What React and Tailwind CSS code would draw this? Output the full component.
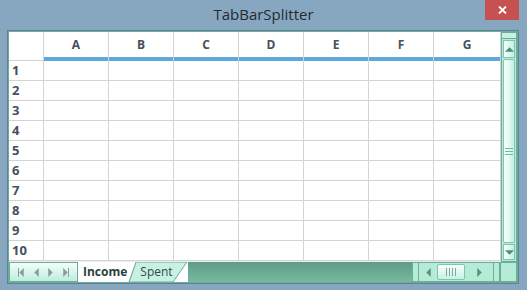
import React from 'react';

const COLS = ['A', 'B', 'C', 'D', 'E', 'F', 'G'];
const ROWS = [1, 2, 3, 4, 5, 6, 7, 8, 9, 10];

const Tri = ({ dir, className }) => {
  const pts = {
    up: '0,5 5,0 10,5',
    down: '0,0 10,0 5,5',
    left: '5,0 5,10 0,5',
    right: '0,0 0,10 5,5',
  }[dir];
  const box = dir === 'up' || dir === 'down' ? '0 0 10 5' : '0 0 5 10';
  const size = dir === 'up' || dir === 'down' ? { w: 10, h: 5 } : { w: 5, h: 10 };
  return (
    <svg width={size.w} height={size.h} viewBox={box} className={className}>
      <polygon points={pts} fill="currentColor" />
    </svg>
  );
};

const TabNav = () => (
  <div className="w-[69px] h-full flex items-center justify-around px-[3px] border border-[#6aae98] bg-gradient-to-b from-[#f4fdf9] to-[#bdeedd] text-[#8d9c98]">
    <div className="flex items-center">
      <div className="w-[1px] h-[9px] bg-current" />
      <Tri dir="left" className="w-[5px] h-[9px]" />
    </div>
    <Tri dir="left" className="w-[5px] h-[9px]" />
    <Tri dir="right" className="w-[5px] h-[9px]" />
    <div className="flex items-center">
      <Tri dir="right" className="w-[5px] h-[9px]" />
      <div className="w-[1px] h-[9px] bg-current" />
    </div>
  </div>
);

const SheetTabs = () => (
  <div className="relative w-[110px] h-full">
    <svg width="110" height="20" viewBox="0 0 110 20" className="absolute inset-0">
      <polygon points="51,20 58,0 109,0 95,20" fill="#c9f1e3" stroke="#6aae98" strokeWidth="1" />
      <polygon points="0,0 58,0 51,20 0,20" fill="#ffffff" />
      <line x1="51" y1="20" x2="58" y2="0" stroke="#6aae98" strokeWidth="1" />
    </svg>
    <div className="relative flex h-full items-center text-[12px] leading-none" style={{ fontFamily: '"Open Sans", sans-serif' }}>
      <span className="ml-[5px] font-bold text-[#28433a]">Income</span>
      <span className="ml-[13px] text-[#2f4d44]">Spent</span>
    </div>
  </div>
);

const HScroll = () => (
  <div className="w-[88px] h-full flex border border-[#6aae98] bg-[#b6ebd8]">
    <div className="w-[6px] h-full border-r border-[#6aae98]" />
    <div className="w-[18px] flex items-center justify-center text-[#5c8f80]">
      <Tri dir="left" className="w-[5px] h-[9px]" />
    </div>
    <div className="w-[28px] my-[1px] rounded-[2px] border border-[#7fc4ad] bg-gradient-to-b from-[#f6fffb] to-[#c9f1e3] flex items-center justify-center gap-[2px]">
      <div className="w-[1px] h-[8px] bg-[#7aa99a]" />
      <div className="w-[1px] h-[8px] bg-[#7aa99a]" />
      <div className="w-[1px] h-[8px] bg-[#7aa99a]" />
      <div className="w-[1px] h-[8px] bg-[#7aa99a]" />
    </div>
    <div className="flex-1 flex items-center justify-center text-[#5c8f80]">
      <Tri dir="right" className="w-[5px] h-[9px]" />
    </div>
    <div className="w-[6px] h-full border-l border-[#6aae98]" />
  </div>
);

const VScroll = () => (
  <div className="w-[17px] h-full flex flex-col bg-[#b6ebd8] border border-[#6aae98]">
    <div className="h-[6px] border-b border-[#6aae98] bg-[#c8f0e2]" />
    <div className="h-[18px] mx-[1px] mt-[1px] border border-[#7fc4ad] bg-gradient-to-r from-[#f6fffb] to-[#c3efe0] flex items-center justify-center text-[#4e8f7c]">
      <Tri dir="up" className="w-[9px] h-[5px]" />
    </div>
    <div className="flex-1 mx-[1px] my-[1px] rounded-[2px] border border-[#7fc4ad] bg-gradient-to-r from-[#f6fffb] via-[#e2f9f1] to-[#c3efe0] flex flex-col items-center justify-center gap-[2px]">
      <div className="w-[8px] h-[1px] bg-[#72b9a2]" />
      <div className="w-[8px] h-[1px] bg-[#72b9a2]" />
      <div className="w-[8px] h-[1px] bg-[#72b9a2]" />
    </div>
    <div className="h-[16px] mx-[1px] mb-[1px] border border-[#7fc4ad] bg-gradient-to-r from-[#f6fffb] to-[#c3efe0] flex items-center justify-center text-[#4e8f7c]">
      <Tri dir="down" className="w-[9px] h-[5px]" />
    </div>
  </div>
);

const Grid = () => (
  <div className="w-[492px] h-full bg-white flex flex-col" style={{ fontFamily: '"Open Sans", sans-serif' }}>
    <div className="flex h-[29px]">
      <div className="w-[35px] h-full border-r border-b border-[#d4d4d4]" />
      {COLS.map((c, i) => (
        <div key={c} className={`${i === 6 ? 'w-[67px]' : 'w-[65px]'} h-full flex flex-col border-r border-[#d4d4d4]`}>
          <div className="flex-1 flex items-center justify-center text-[12px] font-bold text-[#474e5c] pt-[1px]">{c}</div>
          <div className="h-[4px] bg-[#5ea9dc]" />
        </div>
      ))}
    </div>
    {ROWS.map((r) => (
      <div key={r} className="flex h-[20px]">
        <div className="w-[35px] h-full border-r border-b border-[#d4d4d4] flex items-center pl-[3px] text-[13px] font-bold text-[#474e5c]">{r}</div>
        {COLS.map((c, i) => (
          <div key={c} className={`${i === 6 ? 'w-[67px]' : 'w-[65px]'} h-full border-r border-b border-[#d4d4d4]`} />
        ))}
      </div>
    ))}
    <div className="flex-1 bg-[#ececec]" />
  </div>
);

export default function App() {
  return (
    <div className="w-[527px] h-[290px] bg-[#87a7c1] flex flex-col">
      <div className="relative h-[30px] flex items-center justify-center">
        <span className="text-[15px] text-[#262a30] -mt-[1px]" style={{ fontFamily: '"Open Sans", sans-serif' }}>TabBarSplitter</span>
        <div className="absolute right-[8px] top-0 w-[34px] h-[20px] bg-[#c75050] flex items-center justify-center">
          <svg width="9" height="8" viewBox="0 0 9 8">
            <path d="M1 0.5 L8 7.5 M8 0.5 L1 7.5" stroke="#ffffff" strokeWidth="1.8" />
          </svg>
        </div>
      </div>
      <div className="ml-[7px] w-[512px] h-[254px] border border-[#5f8197]">
        <div className="w-full h-full border border-[#6aae98] flex flex-col bg-white">
          <div className="flex h-[230px]">
            <Grid />
            <VScroll />
          </div>
          <div className="flex-1 flex bg-white">
            <TabNav />
            <SheetTabs />
            <div className="flex-1 h-full bg-gradient-to-b from-[#5d9c86] to-[#79b9a2]" />
            <HScroll />
            <div className="w-[17px] h-full bg-[#b6ebd8] border border-[#6aae98]" />
          </div>
        </div>
      </div>
    </div>
  );
}
